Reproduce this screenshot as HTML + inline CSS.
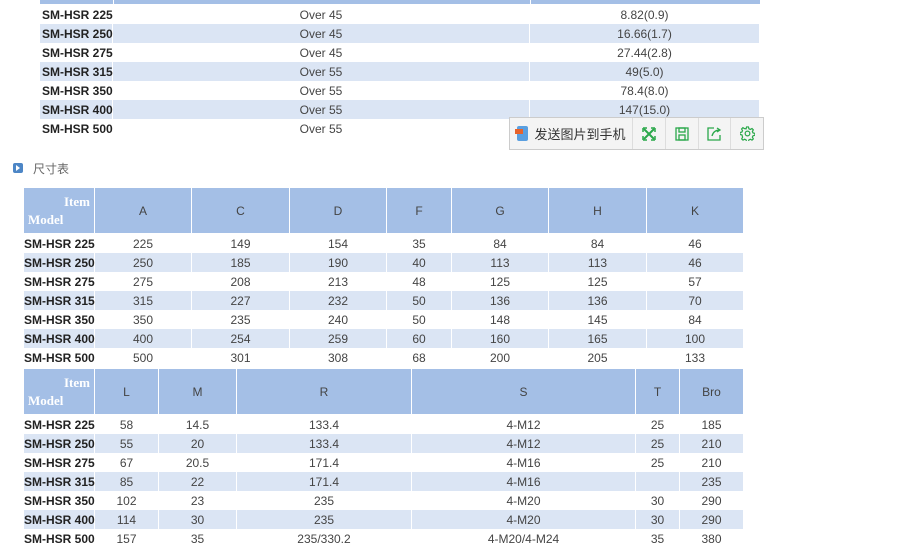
<!DOCTYPE html><html><head><meta charset="utf-8"><style>
body{margin:0;width:897px;height:555px;background:#fff;position:relative;overflow:hidden;font-family:"Liberation Sans","Noto Sans CJK SC",sans-serif;font-size:12px;color:#444}
table{position:absolute;border-collapse:separate;border-spacing:0;table-layout:fixed}
td{height:19px;padding:0;text-align:center;border-right:1px solid #fff;white-space:nowrap}
td:first-child{text-align:left;font-weight:bold;color:#222}
table.t1 td:first-child{padding-left:2px}
tr.s td{background:#dbe5f4}
th{background:#a4bfe6;font-weight:normal;color:#444;height:45px;border-right:1px solid #fff;border-bottom:1px solid #fff;padding:0}
th.m{color:#fff;font-weight:bold;font-family:"Liberation Serif",serif;font-size:13px;text-align:left;line-height:18px}
.tb{position:absolute;left:509px;top:117px;width:253px;height:31px;border:1px solid #ccc;background:#f4f4f4;display:flex}
.tb div{border-right:1px solid #ddd;display:flex;align-items:center;justify-content:center;width:32px}
</style></head><body>
<div style="position:absolute;left:40px;top:0;width:720px;height:4px;background:#a4bfe6"></div>
<div style="position:absolute;left:113px;top:0;width:1px;height:4px;background:#fff"></div>
<div style="position:absolute;left:530px;top:0;width:1px;height:4px;background:#fff"></div>
<table class="t1" style="left:40px;top:5px;width:720px">
<col style="width:73px"><col style="width:417px"><col style="width:230px">
<tr><td>SM-HSR 225</td><td>Over 45</td><td>8.82(0.9)</td></tr>
<tr class="s"><td>SM-HSR 250</td><td>Over 45</td><td>16.66(1.7)</td></tr>
<tr><td>SM-HSR 275</td><td>Over 45</td><td>27.44(2.8)</td></tr>
<tr class="s"><td>SM-HSR 315</td><td>Over 55</td><td>49(5.0)</td></tr>
<tr><td>SM-HSR 350</td><td>Over 55</td><td>78.4(8.0)</td></tr>
<tr class="s"><td>SM-HSR 400</td><td>Over 55</td><td>147(15.0)</td></tr>
<tr><td>SM-HSR 500</td><td>Over 55</td><td></td></tr>
</table>
<div class="tb">
<div style="width:123px;font-size:13px;color:#333"><span style="display:inline-block;width:11px;height:15px;background:#5a9fe0;border-radius:2px;margin-right:7px;position:relative"><span style="position:absolute;left:-2px;top:3px;width:8px;height:5px;background:#e8632c"></span></span>发送图片到手机</div>
<div><svg width="14" height="14" viewBox="0 0 14 14" stroke="#2aa84a" stroke-width="2" fill="none"><path d="M2 2l10 10M12 2L2 12"/><path d="M1 1h4M1 1v4M13 1h-4M13 1v4M1 13h4M1 13v-4M13 13h-4M13 13v-4" stroke-width="1.5"/></svg></div>
<div><svg width="14" height="14" viewBox="0 0 14 14" stroke="#2aa84a" stroke-width="1.3" fill="none"><rect x="1" y="1" width="12" height="12"/><rect x="4" y="1" width="6" height="4"/><rect x="4" y="8" width="6" height="5"/></svg></div>
<div><svg width="15" height="14" viewBox="0 0 15 14" stroke="#2aa84a" stroke-width="1.3" fill="none"><path d="M7 1H1v12h12V8"/><path d="M5 9c1-4 4-6 8-6M10 1l3 2-3 2"/></svg></div>
<div style="border:none"><svg width="15" height="15" viewBox="0 0 16 16" stroke="#2aa84a" stroke-width="1.3" fill="none"><circle cx="8" cy="8" r="2.5"/><path d="M7 1h2l.5 2 1.5.7 1.8-1 1.4 1.4-1 1.8.7 1.5 2 .5v2l-2 .5-.7 1.5 1 1.8-1.4 1.4-1.8-1-1.5.7-.5 2H7l-.5-2-1.5-.7-1.8 1-1.4-1.4 1-1.8L2.1 9.5 0 9V7l2-.5.7-1.5-1-1.8 1.4-1.4 1.8 1L6.5 3z"/></svg></div>
</div>
<div style="position:absolute;left:13px;top:163px;width:10px;height:10px;background:#4d86c6;border-radius:2px"><span style="position:absolute;left:3px;top:2px;border-left:4px solid #fff;border-top:3px solid transparent;border-bottom:3px solid transparent"></span></div>
<div style="position:absolute;left:33px;top:160px;color:#666;font-size:12px">尺寸表</div>
<table style="left:24px;top:188px;width:720px">
<col style="width:71px"><col style="width:97px"><col style="width:98px"><col style="width:97px"><col style="width:65px"><col style="width:97px"><col style="width:98px"><col style="width:97px">
<tr><th class="m"><div style="text-align:right;padding-right:4px">Item</div><div style="padding-left:4px">Model</div></th><th>A</th><th>C</th><th>D</th><th>F</th><th>G</th><th>H</th><th>K</th></tr>
<tr><td>SM-HSR 225</td><td>225</td><td>149</td><td>154</td><td>35</td><td>84</td><td>84</td><td>46</td></tr>
<tr class="s"><td>SM-HSR 250</td><td>250</td><td>185</td><td>190</td><td>40</td><td>113</td><td>113</td><td>46</td></tr>
<tr><td>SM-HSR 275</td><td>275</td><td>208</td><td>213</td><td>48</td><td>125</td><td>125</td><td>57</td></tr>
<tr class="s"><td>SM-HSR 315</td><td>315</td><td>227</td><td>232</td><td>50</td><td>136</td><td>136</td><td>70</td></tr>
<tr><td>SM-HSR 350</td><td>350</td><td>235</td><td>240</td><td>50</td><td>148</td><td>145</td><td>84</td></tr>
<tr class="s"><td>SM-HSR 400</td><td>400</td><td>254</td><td>259</td><td>60</td><td>160</td><td>165</td><td>100</td></tr>
<tr><td>SM-HSR 500</td><td>500</td><td>301</td><td>308</td><td>68</td><td>200</td><td>205</td><td>133</td></tr>
</table>
<table style="left:24px;top:369px;width:720px">
<col style="width:71px"><col style="width:64px"><col style="width:78px"><col style="width:175px"><col style="width:224px"><col style="width:44px"><col style="width:64px">
<tr><th class="m"><div style="text-align:right;padding-right:4px">Item</div><div style="padding-left:4px">Model</div></th><th>L</th><th>M</th><th>R</th><th>S</th><th>T</th><th>Bro</th></tr>
<tr><td>SM-HSR 225</td><td>58</td><td>14.5</td><td>133.4</td><td>4-M12</td><td>25</td><td>185</td></tr>
<tr class="s"><td>SM-HSR 250</td><td>55</td><td>20</td><td>133.4</td><td>4-M12</td><td>25</td><td>210</td></tr>
<tr><td>SM-HSR 275</td><td>67</td><td>20.5</td><td>171.4</td><td>4-M16</td><td>25</td><td>210</td></tr>
<tr class="s"><td>SM-HSR 315</td><td>85</td><td>22</td><td>171.4</td><td>4-M16</td><td></td><td>235</td></tr>
<tr><td>SM-HSR 350</td><td>102</td><td>23</td><td>235</td><td>4-M20</td><td>30</td><td>290</td></tr>
<tr class="s"><td>SM-HSR 400</td><td>114</td><td>30</td><td>235</td><td>4-M20</td><td>30</td><td>290</td></tr>
<tr><td>SM-HSR 500</td><td>157</td><td>35</td><td>235/330.2</td><td>4-M20/4-M24</td><td>35</td><td>380</td></tr>
</table>
</body></html>
